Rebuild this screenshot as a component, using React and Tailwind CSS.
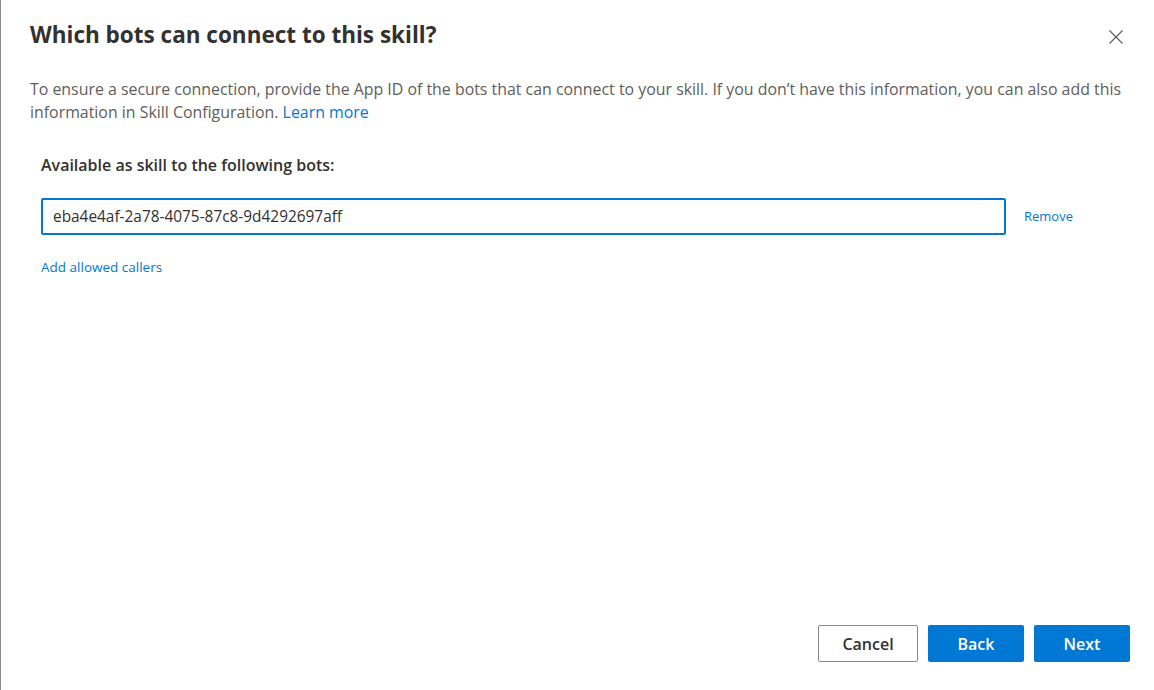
import React from "react";

export default function App() {
  return (
    <div
      className="w-[1154px] h-[690px] bg-white flex flex-col border-l-[1.5px] border-[#8a8a8a] overflow-hidden"
      style={{ fontFamily: '"Open Sans", "Noto Sans", sans-serif' }}
    >
      <div className="flex items-start justify-between pl-[29px] pr-[30px] pt-[20px]">
        <h1 className="text-[22.5px] leading-[30px] font-bold text-[#323130]">
          Which bots can connect to this skill?
        </h1>
        <button className="mt-[9px] w-[16px] h-[16px] flex items-center justify-center text-[#605e5c]">
          <svg width="16" height="16" viewBox="0 0 16 16" fill="none" stroke="#605e5c" strokeWidth="1.2">
            <path d="M1.5 1.5 L14.5 14.5 M14.5 1.5 L1.5 14.5" />
          </svg>
        </button>
      </div>
      <p className="pl-[29px] pr-[20px] mt-[28px] text-[15.9px] leading-[23px] text-[#605e5c]">
        To ensure a secure connection, provide the App ID of the bots that can connect to your skill. If you don’t have this information, you can also add this information in Skill Configuration.{" "}
        <span className="text-[#0078d4]">Learn more</span>
      </p>
      <div className="pl-[40px] mt-[30px] text-[16px] leading-[22px] font-semibold text-[#323130]">
        Available as skill to the following bots:
      </div>
      <div className="pl-[40px] mt-[22px] flex items-center">
        <div className="w-[965px] h-[37px] border-2 border-[#0078d4] rounded-[2px] flex items-center pl-[10px] text-[15.4px] text-[#323130]">
          eba4e4af-2a78-4075-87c8-9d4292697aff
        </div>
        <span className="ml-[18px] text-[13px] text-[#0078d4]">Remove</span>
      </div>
      <div className="pl-[40px] mt-[23px] text-[13.5px] leading-[18px] text-[#0078d4]">
        Add allowed callers
      </div>
      <div className="flex-1" />
      <div className="flex justify-end gap-[10px] pr-[24px] pb-[28px]">
        <button className="w-[100px] h-[37px] rounded-[2px] border border-[#8a8886] bg-white text-[16px] font-semibold text-[#323130]">
          Cancel
        </button>
        <button className="w-[96px] h-[37px] rounded-[2px] bg-[#0078d4] text-[16px] font-semibold text-white">
          Back
        </button>
        <button className="w-[96px] h-[37px] rounded-[2px] bg-[#0078d4] text-[16px] font-semibold text-white">
          Next
        </button>
      </div>
    </div>
  );
}
